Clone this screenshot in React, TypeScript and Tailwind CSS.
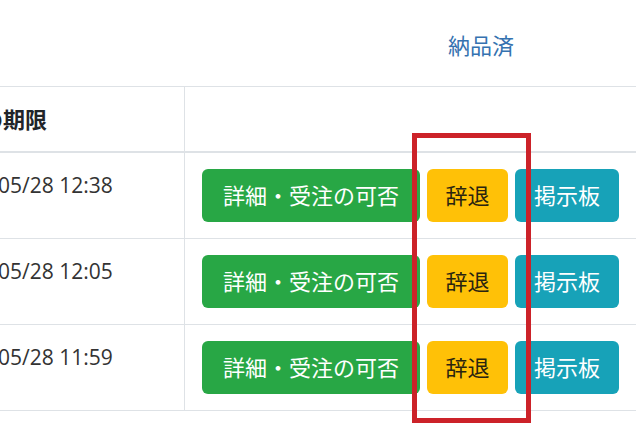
import React from "react";

const rows = ["05/28 12:38", "05/28 12:05", "05/28 11:59"];

export default function App() {
  const font = { fontFamily: '"Open Sans", "Noto Sans CJK JP", sans-serif' };
  return (
    <div className="relative w-[636px] h-[445px] overflow-hidden bg-white text-[#212529]" style={font}>
      <div className="h-[86px] flex">
        <div className="w-[185px]" />
        <div className="flex-1 flex justify-start pl-[263px] pt-[29px]">
          <span className="text-[22px] leading-[33px] text-[#3572b0] whitespace-nowrap">納品済</span>
        </div>
      </div>
      <div className="border-t border-[#dee2e6]">
        <div className="flex h-[66px] border-b-2 border-[#dee2e6]">
          <div className="w-[185px] shrink-0 border-r border-[#dee2e6] pt-[16px] overflow-hidden">
            <span className="block ml-[-19px] text-[22px] leading-[33px] font-bold whitespace-nowrap">の期限</span>
          </div>
          <div className="flex-1" />
        </div>
        {rows.map((t) => (
          <div key={t} className="flex h-[86px] border-b border-[#dee2e6]">
            <div className="w-[185px] shrink-0 border-r border-[#dee2e6] pt-[16px] overflow-hidden">
              <span className="block ml-[-2px] text-[21px] leading-[33px] text-[#333] whitespace-nowrap">{t}</span>
            </div>
            <div className="flex-1 flex items-start gap-[7px] pl-[17px] pt-[16px]">
              <button className="h-[53px] w-[218px] rounded-[6px] bg-[#28a745] text-white text-[22px] flex items-center justify-center whitespace-nowrap">
                詳細・受注の可否
              </button>
              <button className="h-[53px] w-[81px] rounded-[6px] bg-[#ffc107] text-[#2a2410] text-[22px] flex items-center justify-center">
                辞退
              </button>
              <button className="h-[53px] w-[104px] rounded-[6px] bg-[#17a2b8] text-white text-[22px] flex items-center justify-center">
                掲示板
              </button>
            </div>
          </div>
        ))}
      </div>
      <div className="absolute left-[412px] top-[133px] w-[119px] h-[290px] border-[5px] border-[#cc2229]" />
    </div>
  );
}
